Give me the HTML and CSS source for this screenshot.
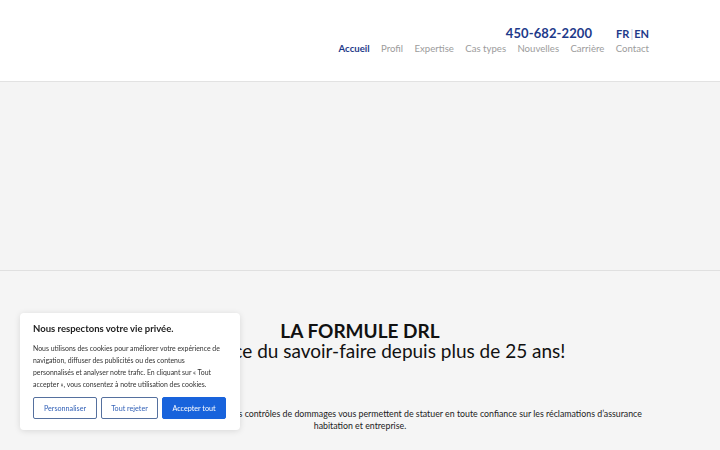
FILE: index.html
```html
<!DOCTYPE html>
<html lang="fr">
<head>
    <meta charset="utf-8">
    <title>DRL</title>
    <meta name="viewport" content="width=device-width, initial-scale=1.0">
    <link rel="stylesheet" href="styles.css">
</head>
<body>
    <header class="site-header">
        <div class="header-right">
            <div class="top-row">
                <a class="phone" href="#">450-682-2200</a>
                <div class="lang"><a class="active" href="#">FR</a><span class="sep">|</span><a href="#">EN</a></div>
            </div>
            <nav class="main-nav">
                <a class="current" href="#">Accueil</a>
                <a href="#">Profil</a>
                <a href="#">Expertise</a>
                <a href="#">Cas types</a>
                <a href="#">Nouvelles</a>
                <a href="#">Carrière</a>
                <a href="#">Contact</a>
            </nav>
        </div>
    </header>

    <section class="hero"></section>

    <section class="intro">
        <h1>LA FORMULE DRL</h1>
        <h2>L’excellence du savoir-faire depuis plus de 25 ans!</h2>
        <p>Nos services d’expertise en sinistres et nos contrôles de dommages vous permettent de statuer en toute confiance sur les réclamations d’assurance<br>habitation et entreprise.</p>
    </section>

    <!-- Cookie consent -->
    <div class="cookie-box">
        <h3>Nous respectons votre vie privée.</h3>
        <p>Nous utilisons des cookies pour améliorer votre expérience de navigation, diffuser des publicités ou des contenus personnalisés et analyser notre trafic. En cliquant sur « Tout accepter », vous consentez à notre utilisation des cookies.</p>
        <div class="cookie-buttons">
            <button class="btn-outline btn-wide">Personnaliser</button>
            <button class="btn-outline">Tout rejeter</button>
            <button class="btn-accept btn-wide">Accepter tout</button>
        </div>
    </div>
</body>
</html>
```

FILE: styles.css
```css
body {
    margin: 0;
    font-family: Lato, "Open Sans", sans-serif;
    background-color: #f5f5f5;
    color: #111;
}
a {
    text-decoration: none;
}

.site-header {
    height: 81px;
    background-color: #fff;
    border-bottom: 1px solid #e2e2e2;
    display: flex;
    justify-content: flex-end;
    padding-right: 71px;
}
.header-right {
    display: flex;
    flex-direction: column;
    align-items: flex-end;
    padding-top: 25px;
}
.top-row {
    display: flex;
    align-items: baseline;
    gap: 24px;
}
.phone {
    color: #1e3a8a;
    font-size: 13px;
    font-weight: bold;
    letter-spacing: 0.1px;
}
.lang {
    font-size: 11px;
    font-weight: bold;
}
.lang a {
    color: #1e3a8a;
}
.lang .sep {
    color: #b9c3dd;
    font-weight: normal;
    margin: 0 1px;
}
.main-nav {
    display: flex;
    gap: 11.4px;
    margin-top: 2px;
}
.main-nav a {
    font-size: 9.6px;
    color: #9c9c9c;
}
.main-nav a.current {
    color: #1e3a8a;
    font-weight: bold;
}

.hero {
    height: 188px;
    background-color: #f4f4f4;
    border-bottom: 1px solid #e0e0e0;
}

.intro {
    text-align: center;
    padding-top: 49px;
}
.intro h1 {
    margin: 0;
    font-size: 19px;
    font-weight: bold;
    line-height: 21px;
}
.intro h2 {
    margin: 0;
    font-size: 19px;
    font-weight: normal;
    line-height: 19px;
}
.intro p {
    margin: 48px 0 0;
    font-size: 8.8px;
    line-height: 12px;
    color: #222;
}

.cookie-box {
    position: fixed;
    left: 20px;
    top: 313px;
    width: 194px;
    padding: 9px 13px 11px;
    background-color: #fff;
    border-radius: 4px;
    box-shadow: 0 1px 6px rgba(0, 0, 0, 0.12);
}
.cookie-box h3 {
    margin: 0 0 6px;
    font-size: 9.5px;
    font-weight: bold;
    color: #222;
    line-height: 14px;
}
.cookie-box p {
    margin: 0 0 7px;
    font-size: 6.9px;
    line-height: 12px;
    color: #333;
}
.cookie-buttons {
    display: flex;
    gap: 4px;
}
.cookie-buttons button {
    width: 57px;
    height: 22px;
    font-family: Lato, sans-serif;
    font-size: 7.2px;
    border-radius: 2px;
    cursor: pointer;
    padding: 0;
}
.cookie-buttons .btn-wide {
    width: 64px;
}
.btn-outline {
    background-color: #fff;
    color: #3563b8;
    border: 1.5px solid #55709e;
}
.btn-accept {
    background-color: #1863dc;
    color: #fff;
    border: 1.5px solid #1863dc;
}
```
